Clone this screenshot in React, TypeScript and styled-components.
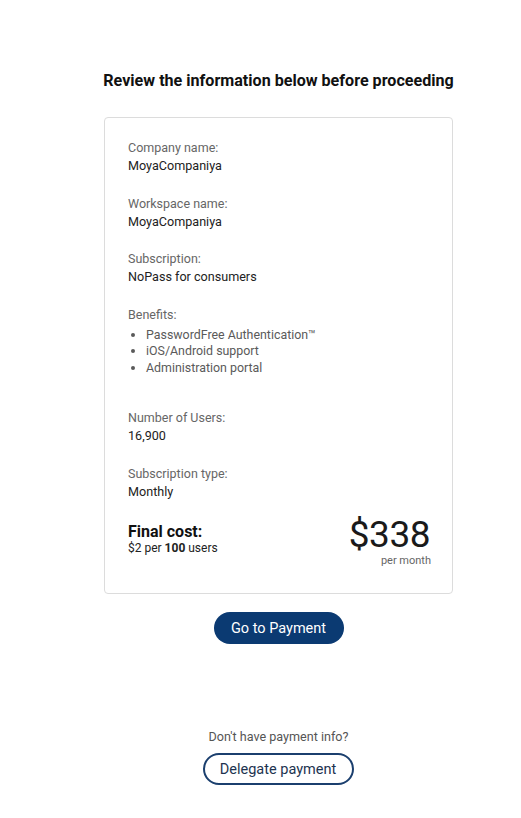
import React from "react";
import styled, { createGlobalStyle } from "styled-components";

const GlobalStyle = createGlobalStyle`
  body {
    margin: 0;
    background: #fff;
    font-family: Roboto, "Liberation Sans", Arial, sans-serif;
    color: #222;
  }
`;

const Page = styled.div`
  display: flex;
  flex-direction: column;
  align-items: center;
  width: 349px;
  margin-left: 104px;
  padding-top: 71px;
  padding-bottom: 30px;
`;

const Title = styled.h1`
  margin: 0 0 26px;
  font-size: 16.1px;
  line-height: 20px;
  font-weight: 700;
  color: #111;
  white-space: nowrap;
`;

const Card = styled.div`
  box-sizing: border-box;
  width: 100%;
  border: 1px solid #dcdcdc;
  border-radius: 4px;
  padding: 20px 22px 26px 23px;
  display: flex;
  flex-direction: column;
`;

const Field = styled.div<{ $gap?: number }>`
  display: flex;
  flex-direction: column;
  margin-bottom: ${(p) => p.$gap ?? 18}px;
`;

const Label = styled.span`
  font-size: 12.5px;
  line-height: 19px;
  color: #666;
`;

const Value = styled.span`
  font-size: 12.6px;
  line-height: 18.5px;
  color: #222;
`;

const List = styled.ul`
  margin: 3px 0 0;
  padding-left: 18px;
  font-size: 12.4px;
  line-height: 16.5px;
  color: #5a5a5a;
`;

const Cost = styled.div`
  display: flex;
  justify-content: space-between;
  align-items: flex-start;
  margin-top: 15px;
`;

const CostLeft = styled.div`
  display: flex;
  flex-direction: column;
  padding-top: 6px;
`;

const CostTitle = styled.span`
  font-size: 16px;
  line-height: 19px;
  font-weight: 700;
  color: #111;
`;

const CostNote = styled.span`
  font-size: 12px;
  line-height: 14px;
  color: #222;
  b {
    font-weight: 700;
  }
`;

const Price = styled.div`
  display: flex;
  flex-direction: column;
  align-items: flex-end;
`;

const Amount = styled.span`
  font-size: 37px;
  line-height: 37px;
  color: #1a1a1a;
  letter-spacing: -0.5px;
`;

const Per = styled.span`
  margin-top: 2px;
  font-size: 11px;
  line-height: 12px;
  color: #666;
  margin-right: -1px;
`;

const PrimaryButton = styled.button`
  margin-top: 18px;
  height: 32px;
  width: 130px;
  border: none;
  border-radius: 16px;
  background: #0b3a72;
  color: #fff;
  font-family: inherit;
  font-size: 14.5px;
  cursor: pointer;
`;

const Hint = styled.p`
  margin: 86px 0 9px;
  font-size: 12.6px;
  line-height: 14px;
  color: #555;
`;

const OutlineButton = styled.button`
  box-sizing: border-box;
  height: 32px;
  width: 151px;
  border: 2px solid #1b3f6e;
  border-radius: 16px;
  background: #fff;
  color: #1d3350;
  font-family: inherit;
  font-size: 14.5px;
  cursor: pointer;
  margin-left: -1px;
`;

const fields = [
  ["Company name:", "MoyaCompaniya"],
  ["Workspace name:", "MoyaCompaniya"],
  ["Subscription:", "NoPass for consumers"],
];

export default function App() {
  return (
    <>
      <GlobalStyle />
      <Page>
        <Title>Review the information below before proceeding</Title>
        <Card>
          {fields.map(([l, v]) => (
            <Field key={l}>
              <Label>{l}</Label>
              <Value>{v}</Value>
            </Field>
          ))}
          <Field $gap={32}>
            <Label>Benefits:</Label>
            <List>
              <li>PasswordFree Authentication™</li>
              <li>iOS/Android support</li>
              <li>Administration portal</li>
            </List>
          </Field>
          <Field>
            <Label>Number of Users:</Label>
            <Value>16,900</Value>
          </Field>
          <Field $gap={0}>
            <Label>Subscription type:</Label>
            <Value>Monthly</Value>
          </Field>
          <Cost>
            <CostLeft>
              <CostTitle>Final cost:</CostTitle>
              <CostNote>
                $2 per <b>100</b> users
              </CostNote>
            </CostLeft>
            <Price>
              <Amount>$338</Amount>
              <Per>per month</Per>
            </Price>
          </Cost>
        </Card>
        <PrimaryButton>Go to Payment</PrimaryButton>
        <Hint>Don't have payment info?</Hint>
        <OutlineButton>Delegate payment</OutlineButton>
      </Page>
    </>
  );
}
